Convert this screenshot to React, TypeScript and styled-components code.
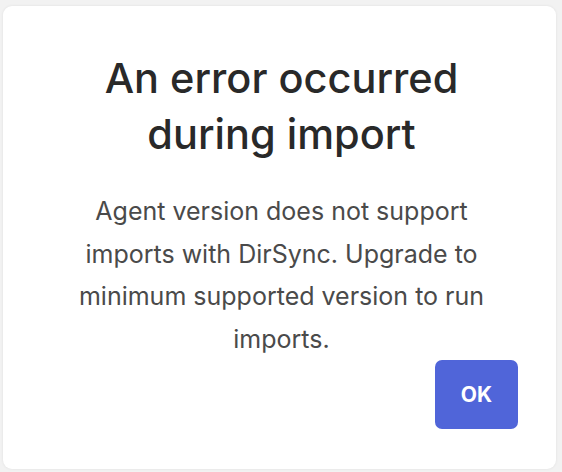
import React from 'react';
import styled, { createGlobalStyle } from 'styled-components';

const GlobalStyle = createGlobalStyle`
    html, body {
        margin: 0;
        padding: 0;
        background: #f2f2f2;
    }
    body {
        width: 562px;
        height: 472px;
        overflow: hidden;
    }
`;

const Backdrop = styled.div`
    box-sizing: border-box;
    width: 562px;
    height: 472px;
    padding: 6px 6px 3px 3px;
    display: flex;
`;

const Dialog = styled.div`
    box-sizing: border-box;
    flex: 1;
    display: flex;
    flex-direction: column;
    align-items: center;
    background: #ffffff;
    border-radius: 9px;
    box-shadow: 0 0 3px rgba(0, 0, 0, 0.08);
    padding: 44px 38px 42px 42px;
`;

const Title = styled.h1`
    margin: 0;
    font-family: Inter, 'Noto Sans', sans-serif;
    font-size: 41.5px;
    line-height: 56px;
    font-weight: 500;
    color: #292929;
    text-align: center;
`;

const Message = styled.p`
    margin: 28px 0 0;
    max-width: 430px;
    font-family: Inter, 'Noto Sans', sans-serif;
    font-size: 25px;
    line-height: 42.5px;
    color: #4a4a4a;
    text-align: center;
`;

const Actions = styled.div`
    align-self: stretch;
    display: flex;
    justify-content: flex-end;
    margin-top: auto;
`;

const Button = styled.button`
    width: 83px;
    height: 69px;
    border: 0;
    border-radius: 7px;
    background: #5065d9;
    color: #ffffff;
    font-family: Inter, 'Noto Sans', sans-serif;
    font-size: 21px;
    font-weight: 700;
    cursor: pointer;
`;

const App = () => (
    <>
        <GlobalStyle />
        <Backdrop>
            <Dialog>
                <Title>
                    An error occurred
                    <br />
                    during import
                </Title>
                <Message>
                    Agent version does not support imports with DirSync. Upgrade to minimum
                    supported version to run imports.
                </Message>
                <Actions>
                    <Button type="button">OK</Button>
                </Actions>
            </Dialog>
        </Backdrop>
    </>
);

export default App;
